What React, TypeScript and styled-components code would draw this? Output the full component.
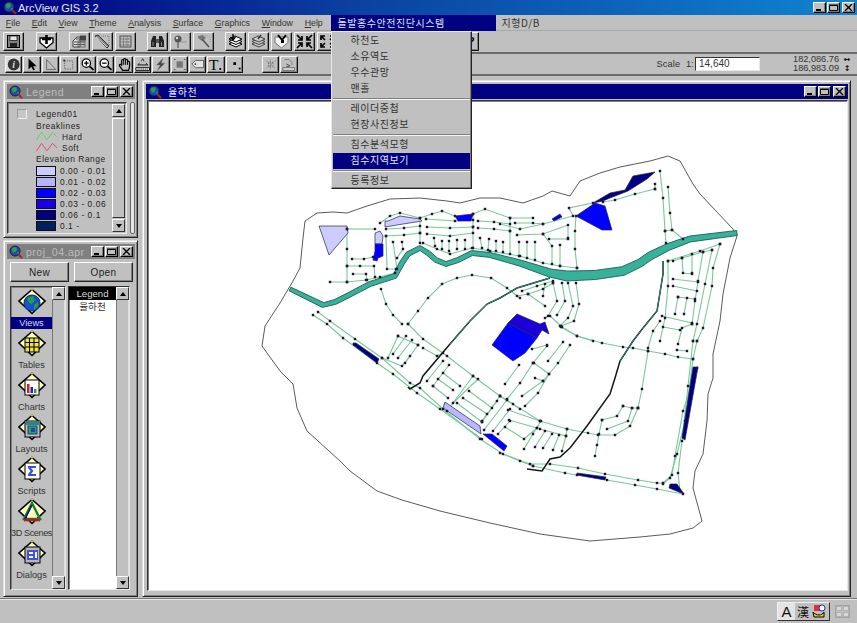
import React from "react";
import styled, { createGlobalStyle } from "styled-components";
import { FaRegHandPaper } from "react-icons/fa";

const GlobalStyle = createGlobalStyle`
  html, body { margin: 0; padding: 0; height: 100%; overflow: hidden; background: #c0c0c0; }
  #root { height: 100%; }
  * { box-sizing: border-box; }
`;

const UI_FONT = `"Liberation Sans", "Noto Sans CJK KR", Arial, sans-serif`;
const KR_FONT = `"Noto Sans CJK KR", "Liberation Sans", sans-serif`;

const Desk = styled.div`
  width: 857px;
  height: 623px;
  display: flex;
  flex-direction: column;
  background: #c0c0c0;
  font-family: ${UI_FONT};
  font-size: 9.2px;
  color: #222;
`;

const AppTitle = styled.header`
  height: 15px;
  flex: none;
  display: flex;
  align-items: center;
  padding: 0 2px 0 3px;
  background: linear-gradient(90deg, #000080 0%, #0a3fa0 40%, #1084d0 100%);
  color: #e8e8f4;
  font-size: 11px;
  gap: 1px;
`;

const Grow = styled.div`
  flex: 1;
`;

const WinButtons = styled.div`
  display: flex;
  gap: 1px;
`;

const WinBtn = styled.button<{ $last?: boolean }>`
  width: 13px;
  height: 11px;
  padding: 0;
  margin-left: ${(p) => (p.$last ? "1px" : "0")};
  display: flex;
  align-items: center;
  justify-content: center;
  background: #c0c0c0;
  border: 1px solid;
  border-color: #fff #000 #000 #fff;
  box-shadow: inset -1px -1px #808080;
`;

const MenuBar = styled.nav`
  height: 16px;
  flex: none;
  display: flex;
  align-items: center;
  position: relative;
  border-bottom: 1px solid #a8a8a8;
  color: #333;
`;

const MenuItem = styled.span`
  padding: 0 5.85px;
  font-size: 8.8px;
  white-space: nowrap;
  u {
    text-underline-offset: 1px;
  }
`;

const KoreanMenu = styled.div<{ $open?: boolean }>`
  position: relative;
  height: 16px;
  display: flex;
  align-items: center;
  width: ${(p) => (p.$open ? "165px" : "auto")};
  margin-left: ${(p) => (p.$open ? "2px" : "6px")};
  padding-left: ${(p) => (p.$open ? "7px" : "0")};
  font-family: ${KR_FONT};
  font-size: 10px;
  letter-spacing: 0.55px;
  background: ${(p) => (p.$open ? "#000080" : "transparent")};
  color: ${(p) => (p.$open ? "#dfe3f2" : "#333")};
`;

const Dropdown = styled.div`
  position: absolute;
  left: 0;
  top: 16px;
  width: 141px;
  height: 158px;
  z-index: 10;
  padding: 1px;
  background: #c0c0c0;
  border: 1px solid;
  border-color: #e8e8e8 #222 #222 #e8e8e8;
  box-shadow: inset -1px -1px #808080;
  color: #333;
`;

const DropItem = styled.div<{ $active?: boolean }>`
  height: 16px;
  line-height: 14px;
  padding-left: 18px;
  background: ${(p) => (p.$active ? "#000080" : "transparent")};
  color: ${(p) => (p.$active ? "#e4e6f4" : "#333")};
`;

const DropRule = styled.hr`
  height: 2px;
  margin: 1px 0;
  border: 0;
  border-top: 1px solid #808080;
  border-bottom: 1px solid #f4f4f4;
`;

const ToolRow = styled.div<{ $h: number }>`
  height: ${(p) => p.$h}px;
  flex: none;
  display: flex;
  align-items: center;
  padding-left: 3px;
  border-bottom: 2px solid #6a6a6a;
`;

const ToolBtn = styled.button<{ $w: number; $h: number; $gap?: number; $pressed?: boolean }>`
  width: ${(p) => p.$w}px;
  height: ${(p) => p.$h}px;
  margin-left: ${(p) => p.$gap ?? 0}px;
  flex: none;
  padding: 0;
  display: flex;
  align-items: center;
  justify-content: center;
  background: ${(p) => (p.$pressed ? "#dcdcdc" : "#c0c0c0")};
  border: 1px solid;
  border-color: #f4f4f4 #111 #111 #f4f4f4;
  border-radius: 1px;
  box-shadow: inset -1px -1px #808080;
`;

const ScaleGroup = styled.div`
  margin-left: auto;
  display: flex;
  align-items: center;
  color: #333;
`;

const ScaleLabel = styled.span`
  font-size: 9.2px;
  letter-spacing: 0.2px;
  margin-right: 1px;
`;

const ScaleInput = styled.div`
  width: 65px;
  height: 14px;
  line-height: 12px;
  padding-left: 3px;
  font-size: 10px;
  background: #fff;
  border: 1px solid;
  border-color: #333 #e8e8e8 #e8e8e8 #333;
`;

const Coords = styled.div`
  width: 97px;
  padding-right: 6px;
  font-size: 9.2px;
  color: #333;
`;

const CoordRow = styled.div`
  height: 9px;
  line-height: 9px;
  display: flex;
  justify-content: flex-end;
`;

const CoordArrow = styled.span`
  width: 8px;
  margin-left: 4px;
  text-align: center;
  font-family: "DejaVu Sans", sans-serif;
  font-weight: 700;
  font-size: 8px;
  color: #111;
`;

const Workspace = styled.main`
  flex: 1;
  min-height: 0;
  display: flex;
  gap: 4px;
  padding: 4px 6px 1px 3px;
`;

const LeftColumn = styled.div`
  width: 135px;
  flex: none;
  display: flex;
  flex-direction: column;
  gap: 2px;
`;

const Win = styled.section<{ $h?: number }>`
  display: flex;
  flex-direction: column;
  height: ${(p) => (p.$h ? `${p.$h}px` : "auto")};
  flex: ${(p) => (p.$h ? "none" : "1")};
  min-width: 0;
  min-height: 0;
  padding: 3px 2px 3px 3px;
  background: #c0c0c0;
  border: 1px solid;
  border-color: #dfdfdf #222 #222 #dfdfdf;
  box-shadow: inset 1px 1px #fff, inset -1px -1px #808080;
`;

const WinTitle = styled.div<{ $active?: boolean }>`
  height: 15px;
  flex: none;
  display: flex;
  align-items: center;
  gap: 3px;
  padding: 0 2px;
  background: ${(p) => (p.$active ? "#000080" : "#808080")};
  color: ${(p) => (p.$active ? "#eef" : "#bdbdbd")};
  font-size: 10.5px;
  letter-spacing: 0.5px;
`;

const KoreanTitle = styled.span`
  font-family: ${KR_FONT};
  font-size: 10px;
  margin-left: 3px;
`;

const LegendBody = styled.div`
  flex: 1;
  display: flex;
  gap: 3px;
  margin-top: 3px;
  min-height: 0;
`;

const Sunken = styled.div`
  display: flex;
  min-height: 0;
  background: #c0c0c0;
  border: 1px solid;
  border-color: #333 #e8e8e8 #e8e8e8 #333;
  box-shadow: inset 1px 1px #808080;
`;

const LegendPane = styled(Sunken)`
  flex: 1;
  padding: 1px;
`;

const LegendList = styled.div`
  flex: 1;
  padding: 3px 0 0 6px;
  font-size: 8.4px;
  letter-spacing: 0.55px;
  color: #222;
`;

const LegendRow = styled.div<{ $indent?: number; $h?: number }>`
  display: flex;
  align-items: center;
  height: ${(p) => p.$h ?? 11}px;
  padding-left: ${(p) => p.$indent ?? 21}px;
  gap: 4px;
  white-space: nowrap;
`;

const CheckBox = styled.span`
  width: 10px;
  height: 10px;
  margin-right: 5px;
  background: #c6c6c6;
  border: 1px solid;
  border-color: #9a9a9a #f0f0f0 #f0f0f0 #9a9a9a;
`;

const Swatch = styled.span<{ $color: string }>`
  width: 20px;
  height: 10px;
  flex: none;
  background: ${(p) => p.$color};
  border: 1px solid #111;
`;

const Strip = styled.div`
  width: 5px;
  border-radius: 2px;
  background: #e6e6e6;
  border: 1px solid #666;
`;

const ScrollBar = styled.div`
  width: 13px;
  flex: none;
  display: flex;
  flex-direction: column;
`;

const ScrollBtn = styled.div`
  height: 13px;
  flex: none;
  display: flex;
  align-items: center;
  justify-content: center;
  background: #c0c0c0;
  border: 1px solid;
  border-color: #fff #333 #333 #fff;
`;

const ScrollArrow = styled.span<{ $down?: boolean }>`
  width: 0;
  height: 0;
  border-left: 3.5px solid transparent;
  border-right: 3.5px solid transparent;
  ${(p) => (p.$down ? "border-top: 4px solid #000;" : "border-bottom: 4px solid #000;")}
`;

const ScrollMid = styled.div<{ $thumb?: boolean }>`
  flex: 1;
  background: #c0c0c0;
  ${(p) =>
    p.$thumb
      ? "border: 1px solid; border-color: #fff #333 #333 #fff; margin: 1px 0;"
      : "border-left: 1px solid #777; border-right: 1px solid #ddd;"}
`;

const ProjectButtons = styled.div`
  display: flex;
  gap: 5px;
  padding: 3px 2px 4px 3px;
`;

const PushButton = styled.button`
  flex: 1;
  height: 20px;
  padding: 0;
  background: #c0c0c0;
  font-family: ${UI_FONT};
  font-size: 10px;
  letter-spacing: 0.4px;
  color: #222;
  border: 1px solid;
  border-color: #fff #222 #222 #fff;
  box-shadow: inset -1px -1px #808080;
`;

const ProjectPanes = styled.div`
  flex: 1;
  min-height: 0;
  display: flex;
  gap: 2px;
  padding: 0 5px 3px 3px;
`;

const TypePane = styled(Sunken)`
  width: 56px;
  flex: none;
`;

const TypeList = styled.div`
  flex: 1;
  min-width: 0;
  overflow: hidden;
  padding-top: 1px;
`;

const TypeItem = styled.div`
  height: 42px;
  display: flex;
  flex-direction: column;
  align-items: center;
`;

const TypeLabel = styled.span<{ $active?: boolean; $squeeze?: boolean }>`
  align-self: stretch;
  height: 12px;
  line-height: 12px;
  margin-top: 1px;
  text-align: center;
  white-space: nowrap;
  letter-spacing: ${(p) => (p.$squeeze ? "-0.45px" : "0")};
  background: ${(p) => (p.$active ? "#000080" : "transparent")};
  color: ${(p) => (p.$active ? "#d8dcf0" : "#333")};
`;

const DocPane = styled(Sunken)`
  flex: 1;
  background: #fff;
`;

const DocList = styled.div`
  flex: 1;
  min-width: 0;
  text-align: center;
  font-size: 10px;
`;

const DocHead = styled.div`
  height: 13px;
  line-height: 13px;
  background: #000;
  color: #ddd;
  font-size: 9.6px;
`;

const DocRow = styled.div`
  height: 13px;
  line-height: 13px;
  font-family: ${KR_FONT};
  font-size: 9.6px;
  color: #333;
`;

const ViewWin = styled(Win)`
  flex: 1;
`;

const Canvas = styled(Sunken)`
  flex: 1;
  margin: 1px 0 2px 1px;
  background: #fff;
  overflow: hidden;
`;

const MapSvg = styled.svg`
  display: block;
  width: 700px;
  height: 491px;
  flex: none;
`;

const StatusBar = styled.footer`
  height: 25px;
  flex: none;
  display: flex;
  align-items: center;
  justify-content: flex-end;
  gap: 5px;
  padding-right: 7px;
  border-top: 1px solid #7a7a7a;
  box-shadow: inset 0 1px #e6e6e6;
`;

const ImeBar = styled.div`
  height: 19px;
  width: 53px;
  display: flex;
  align-items: center;
  background: #c0c0c0;
  border: 1px solid;
  border-color: #f0f0f0 #333 #333 #f0f0f0;
`;

const ImeA = styled.span`
  width: 17px;
  text-align: center;
  background: #e4e4e4;
  font-size: 15px;
  line-height: 17px;
  color: #111;
`;

const ImeHan = styled.span`
  width: 16px;
  text-align: center;
  font-family: "Noto Sans CJK KR", sans-serif;
  font-size: 12px;
  line-height: 17px;
  color: #111;
`;

const SoftGrid = styled.div`
  width: 15px;
  height: 13px;
  display: grid;
  grid-template-columns: 1fr 1fr;
  grid-template-rows: 1fr 1fr;
  gap: 1px;
  background: #c0c0c0;
  border: 1px solid #a4a4a4;
  span {
    background: #d8d8d8;
    border: 1px solid #b0b0b0;
  }
`;

const Glyph = ({ children }: { children: React.ReactNode }) => (
  <svg width="17" height="15" viewBox="0 0 17 15">{children}</svg>
);

const lens = (
  <>
    <circle cx="7" cy="6" r="4.6" fill="#fff" stroke="#000" strokeWidth="1.4" />
    <path d="M10.5 9.5L15 13.5" stroke="#000" strokeWidth="2" />
  </>
);

const layers = (fill: string, stroke: string) => (
  <>
    <path d="M2 10L8 7L15 10L9 13Z" fill={fill} stroke={stroke} />
    <path d="M2 7.5L8 4.5L15 7.5L9 10.5Z" fill={fill} stroke={stroke} />
    <path d="M2 5L8 2L15 5L9 8Z" fill={fill} stroke={stroke} />
  </>
);

const TOOL_ICONS: Record<string, React.ReactNode> = {
  save: (
    <>
      <rect x="2.5" y="1.5" width="12" height="12" fill="#808080" stroke="#000" />
      <rect x="5" y="2" width="7" height="4.5" fill="#e8e8e8" stroke="#000" strokeWidth="0.7" />
      <rect x="5" y="9" width="7" height="4" fill="#222" />
    </>
  ),
  addTheme: (
    <>
      <path d="M2 4H15V8.5L8.5 14L2 8.5Z" fill="#fff" stroke="#000" strokeWidth="1.3" />
      <path d="M8.5 1V10M4 5H13" stroke="#000" strokeWidth="2.6" />
    </>
  ),
  themeProps: (
    <>
      <path d="M2 7L6 3H9V13H2Z" fill="#ddd" stroke="#444" />
      <rect x="9" y="1.5" width="6" height="5" fill="#444" />
      <path d="M3 8H14M3 10.5H14M5 5H9" stroke="#555" />
      <rect x="7" y="7" width="7" height="6" fill="none" stroke="#666" />
    </>
  ),
  ruler: (
    <>
      <path d="M1 2L4 1L15 12L13 14Z" fill="#888" stroke="#333" />
      <path d="M5 2H15V11" fill="none" stroke="#777" strokeDasharray="1 1" />
      <path d="M2 3L13 13" stroke="#ddd" />
    </>
  ),
  table: (
    <>
      <rect x="3" y="2" width="11" height="11" fill="#bbb" stroke="#555" />
      <path d="M3 5H14M6.5 2V13M10 2V13M3 8H14M3 11H14" stroke="#666" strokeDasharray="1 .6" />
    </>
  ),
  binoculars: (
    <>
      <path d="M2 13V7L4 2H7V13ZM10 13V2H13L15 7V13Z" fill="#222" />
      <rect x="7" y="5" width="3" height="4" fill="#555" />
      <path d="M4 8V12M12.5 8V12" stroke="#888" />
    </>
  ),
  query: (
    <>
      <circle cx="6" cy="5" r="3.5" fill="#555" />
      <circle cx="5" cy="4" r="1.2" fill="#ddd" />
      <path d="M6 8V14" stroke="#666" strokeWidth="1.4" />
      <path d="M9 8H15" stroke="#aaa" strokeWidth="2" />
    </>
  ),
  hammer: (
    <>
      <path d="M3 2L8 1L11 4L7 7L3 4Z" fill="#777" />
      <path d="M7 5L14 13" stroke="#555" strokeWidth="1.6" />
      <path d="M10 2H15V8" fill="none" stroke="#999" strokeDasharray="1 1" />
    </>
  ),
  stackDown: (
    <>
      {layers("#fff", "#000")}
      <path d="M6 0V5M3.5 3L6 6L8.5 3" stroke="#000" strokeWidth="1.4" fill="none" />
    </>
  ),
  stackGrey: (
    <>
      {layers("#ccc", "#444")}
      <path d="M11 1L8 5" stroke="#333" strokeWidth="1.4" />
    </>
  ),
  shield: (
    <>
      <path d="M2 3H15V8.5L8.5 14L2 8.5Z" fill="#f4f4f4" stroke="#777" />
      <path d="M5 1L9 6M13 1L9 6" stroke="#000" strokeWidth="2" />
      <rect x="8" y="6" width="3" height="3" fill="#000" />
    </>
  ),
  zoomIn: <path d="M1 1L6 6M6 2V6H2M16 1L11 6M11 2V6H15M1 14L6 9M6 13V9H2M16 14L11 9M11 13V9H15" stroke="#000" strokeWidth="1.7" fill="none" />,
  zoomOut: <path d="M6 6L2 2M2 6V2H6M11 6L15 2M15 6V2H11M6 9L2 13M2 9V13H6M11 9L15 13M15 9V13H11" stroke="#000" strokeWidth="1.7" fill="none" />,
  help: (
    <>
      <path d="M3 2L7 8" stroke="#000" strokeWidth="1.6" />
      <text x="8" y="11" fontFamily="Liberation Sans" fontSize="11" fontWeight="700">?</text>
    </>
  ),
  info: (
    <>
      <circle cx="8.5" cy="7.5" r="6.5" fill="#333" />
      <text x="8.5" y="11.5" textAnchor="middle" fontFamily="Liberation Serif" fontSize="11" fontStyle="italic" fontWeight="700" fill="#ddd">i</text>
    </>
  ),
  pointer: <path d="M5 1V13L8 10L10.5 14L12 13L10 9.5H14Z" fill="#000" />,
  vertex: <path d="M4 2V13H14ZM4 2" fill="none" stroke="#666" />,
  dashSquare: (
    <>
      <rect x="4" y="3.5" width="9" height="9" fill="none" stroke="#666" strokeDasharray="1.5 1" />
      <rect x="2.5" y="2" width="2" height="2" fill="#333" />
    </>
  ),
  zoomPlus: (
    <>
      {lens}
      <path d="M4.5 6H9.5M7 3.5V8.5" stroke="#000" strokeWidth="1.4" />
    </>
  ),
  zoomMinus: (
    <>
      {lens}
      <path d="M4.5 6H9.5" stroke="#000" strokeWidth="1.4" />
    </>
  ),
  measure: (
    <>
      <path d="M1 11H16V14H1Z" fill="#fff" stroke="#000" />
      <path d="M3 8H14M3 8L5 6M14 8L12 6" stroke="#000" />
      <path d="M7 4L8.5 1L10 4" stroke="#333" fill="none" />
      <path d="M3 12.5H14" stroke="#000" strokeDasharray="1 1" />
    </>
  ),
  bolt: <path d="M11 1L4 8H8L5 14L13 6H9Z" fill="#444" stroke="#777" strokeWidth=".6" />,
  nodes: (
    <>
      <rect x="5" y="4" width="7" height="7" fill="#777" />
      <path d="M2 2H4M13 2H15M2 13H4M13 13H15" stroke="#555" />
    </>
  ),
  tag: (
    <>
      <path d="M2 7L6 3H15V11H6Z" fill="#e4e4e4" stroke="#555" />
      <circle cx="6" cy="7" r="1" fill="#333" />
    </>
  ),
  typeT: (
    <>
      <text x="1" y="13.5" fontFamily="Liberation Serif" fontSize="17" fill="#000">T</text>
      <rect x="12.5" y="11.5" width="2" height="2" fill="#000" />
    </>
  ),
  point: (
    <>
      <rect x="7" y="5" width="3" height="3" fill="#000" />
      <rect x="13" y="11" width="2" height="2" fill="#000" />
    </>
  ),
  scatter: (
    <>
      <path d="M3 3L14 12M14 3L3 12M8 2V13" stroke="#777" strokeDasharray="1 1" />
      <rect x="6" y="5" width="5" height="5" fill="none" stroke="#666" strokeDasharray="1 1" />
    </>
  ),
  note: (
    <>
      <path d="M4 2H9L12 5V8" fill="none" stroke="#777" />
      <path d="M2 11H15V14H2Z" fill="#ddd" stroke="#666" />
      <path d="M6 7L10 9L6 10" fill="none" stroke="#444" />
    </>
  ),
};

const TOP_TOOLS: { icon?: string; gap?: number }[] = [
  { icon: "save" },
  { icon: "addTheme", gap: 12 },
  { icon: "themeProps", gap: 12 },
  { icon: "ruler", gap: 2 },
  { icon: "table", gap: 2 },
  { icon: "binoculars", gap: 11 },
  { icon: "query", gap: 2 },
  { icon: "hammer", gap: 2 },
  { icon: "stackDown", gap: 11 },
  { icon: "stackGrey", gap: 2 },
  { icon: "shield", gap: 2 },
  { icon: "zoomIn", gap: 2 },
  { icon: "zoomOut", gap: 2 },
  { icon: "help", gap: 120 },
];

const BOTTOM_TOOLS: { icon: string; gap?: number; pressed?: boolean }[] = [
  { icon: "info", gap: 2, pressed: true },
  { icon: "pointer", gap: 1 },
  { icon: "vertex", gap: 1 },
  { icon: "dashSquare", gap: 1 },
  { icon: "zoomPlus", gap: 1 },
  { icon: "zoomMinus", gap: 1 },
  { icon: "hand", gap: 1 },
  { icon: "measure", gap: 1 },
  { icon: "bolt", gap: 1 },
  { icon: "nodes", gap: 1 },
  { icon: "tag", gap: 1 },
  { icon: "typeT", gap: 1 },
  { icon: "point", gap: 1 },
  { icon: "scatter", gap: 19 },
  { icon: "note", gap: 1 },
];

const MENUS: [string, string][] = [
  ["F", "ile"],
  ["E", "dit"],
  ["V", "iew"],
  ["T", "heme"],
  ["A", "nalysis"],
  ["S", "urface"],
  ["G", "raphics"],
  ["W", "indow"],
  ["H", "elp"],
];

const LEGEND_RANGES = [
  ["#ccccff", "0.00 - 0.01"],
  ["#b4b4ff", "0.01 - 0.02"],
  ["#0000ff", "0.02 - 0.03"],
  ["#1800e4", "0.03 - 0.06"],
  ["#000080", "0.06 - 0.1"],
  ["#002060", "0.1 -"],
];

const Globe = () => (
  <svg width="14" height="14" viewBox="0 0 14 14">
    <circle cx="6" cy="6" r="5" fill="#1e46c8" stroke="#222" />
    <path d="M3 3L7 2L8 5L5 8L3 6ZM8 7L10 7L9 10Z" fill="#2ca03c" />
    <path d="M9.5 9.5L13 13" stroke="#b02020" strokeWidth="2" />
  </svg>
);

const WindowControls = () => (
  <WinButtons>
    <WinBtn>
      <svg width="9" height="7"><rect x="1" y="5" width="5" height="2" fill="#000" /></svg>
    </WinBtn>
    <WinBtn>
      <svg width="9" height="7"><path d="M0.5 1.5H8.5V6.5H0.5ZM0 1H9" fill="none" stroke="#000" /></svg>
    </WinBtn>
    <WinBtn $last>
      <svg width="9" height="7"><path d="M1 0L8 7M8 0L1 7" stroke="#000" strokeWidth="1.4" /></svg>
    </WinBtn>
  </WinButtons>
);

const VerticalScroll = ({ thumb }: { thumb?: boolean }) => (
  <ScrollBar>
    <ScrollBtn><ScrollArrow /></ScrollBtn>
    <ScrollMid $thumb={thumb} />
    <ScrollBtn><ScrollArrow $down /></ScrollBtn>
  </ScrollBar>
);

const Diamond = ({ children }: { children: React.ReactNode }) => (
  <svg width="28" height="28" viewBox="0 0 28 28">
    <path d="M14 1.5L27 13L14 25.5L1 13Z" fill="#ffffc0" stroke="#000" strokeWidth="1.6" />
    <path d="M12.5 1L14 3L15.5 1Z" fill="#d8c040" />
    {children}
  </svg>
);

const TYPE_ICONS: [string, React.ReactNode][] = [
  [
    "Views",
    <>
      <circle cx="14" cy="15" r="8" fill="#1a50d0" stroke="#103070" />
      <path d="M9 10L15 8L17 12L14 16L11 15ZM16 17L20 14L20 18L16 22Z" fill="#20a040" />
    </>,
  ],
  [
    "Tables",
    <>
      <rect x="7" y="8" width="14" height="14" fill="#f0e040" stroke="#000" />
      <path d="M7 12.5H21M7 17H21M11.5 8V22M16 8V22" stroke="#000" />
    </>,
  ],
  [
    "Charts",
    <>
      <rect x="7" y="8" width="14" height="15" fill="#fff" stroke="#000" />
      <rect x="9" y="12" width="2.5" height="9" fill="#d02020" />
      <rect x="12.5" y="15" width="2.5" height="6" fill="#2020d0" />
      <rect x="16" y="17" width="2.5" height="4" fill="#20a040" />
    </>,
  ],
  [
    "Layouts",
    <>
      <rect x="7" y="7" width="15" height="16" fill="#c0c0c0" stroke="#000" />
      <rect x="7" y="7" width="15" height="4" fill="#308088" />
      <rect x="10" y="12" width="9" height="8" fill="#30a060" stroke="#104080" />
      <path d="M13 14H17V18H13Z" fill="#2040c0" />
    </>,
  ],
  [
    "Scripts",
    <>
      <rect x="7" y="7" width="15" height="16" fill="#fff" stroke="#000" />
      <path d="M10 10H18V12H13L15.5 15L13 18H18V20H10V18L12.5 15L10 12Z" fill="#3c50e0" />
    </>,
  ],
  [
    "3D Scenes",
    <>
      <path d="M14 5L22 21H6Z" fill="none" stroke="#108030" strokeWidth="2.4" />
      <path d="M6 22H22" stroke="#b02020" strokeWidth="2.6" />
      <path d="M14 7L7 21" stroke="#101080" strokeWidth="1.6" />
    </>,
  ],
  [
    "Dialogs",
    <>
      <rect x="7" y="7" width="15" height="16" fill="#b8b8b8" stroke="#000" />
      <rect x="9" y="10" width="11" height="10" fill="#4050e8" />
      <rect x="11" y="12" width="4" height="2" fill="#fff" />
      <rect x="11" y="16" width="4" height="2" fill="#fff" />
      <rect x="17" y="12" width="2" height="6" fill="#fff" />
    </>,
  ],
];

type Pt = [number, number];

const BOUNDARY: Pt[] = [
  [262, 345], [265, 325], [280, 302], [293, 280], [300, 267], [303, 237], [305, 220], [317, 212], [333, 211],
  [347, 212], [367, 205], [390, 198], [420, 197], [447, 200], [460, 202], [480, 197], [500, 197], [523, 202],
  [543, 195], [552, 190], [570, 195], [580, 180], [600, 172], [620, 166], [650, 160], [668, 155], [680, 160],
  [693, 183], [700, 193], [733, 228], [737, 235], [730, 257], [723, 293], [720, 320], [713, 353], [713, 377],
  [708, 393], [707, 420], [703, 453], [695, 470], [693, 487], [702, 520], [693, 527], [670, 533], [640, 536],
  [590, 540], [540, 533], [490, 522], [440, 510], [402, 499], [377, 490], [350, 470], [340, 460], [307, 430],
  [297, 407], [293, 383], [280, 370], [262, 345],
];

// centre line of the river with its width at each point
const RIVER: [number, number, number][] = [
  [290, 288, 4], [323, 304, 5], [335, 301, 5], [347, 295, 5], [370, 283, 5], [395, 275, 5], [402, 262, 5],
  [408, 253, 5], [420, 247, 5], [428, 252, 5], [436, 259, 5], [446, 263, 5], [458, 259, 5], [472, 252, 5],
  [490, 254, 5], [520, 262, 6], [550, 272, 8], [567, 275, 10], [595, 274, 9], [623, 270, 9], [640, 262, 8],
  [650, 255, 8], [668, 246, 7], [690, 238, 6], [737, 232, 5],
];

const ribbon = (line: [number, number, number][]) => {
  const left: string[] = [];
  const right: string[] = [];
  line.forEach(([x, y, w], i) => {
    const [ax, ay] = line[Math.max(i - 1, 0)];
    const [bx, by] = line[Math.min(i + 1, line.length - 1)];
    const len = Math.hypot(bx - ax, by - ay) || 1;
    const nx = ((by - ay) / len) * (w / 2);
    const ny = (-(bx - ax) / len) * (w / 2);
    left.push(`${(x + nx).toFixed(1)},${(y + ny).toFixed(1)}`);
    right.unshift(`${(x - nx).toFixed(1)},${(y - ny).toFixed(1)}`);
  });
  return [...left, ...right].join(" ");
};

const CREEKS: Pt[][] = [
  [[663, 260], [663, 273], [657, 310], [643, 327], [633, 340], [620, 360], [615, 377], [610, 393], [587, 425],
   [570, 447], [560, 456], [550, 458], [542, 470], [527, 468]],
  [[550, 277], [517, 287], [500, 297], [487, 303], [470, 320], [450, 343], [423, 375], [420, 382], [410, 388], [408, 386]],
];

const SHAPES: { fill: string; pts: string }[] = [
  { fill: "#ccccff", pts: "319,225 347,225 348,232 329,254" },
  { fill: "#ccccff", pts: "375,232 380,230 383,235 382,243 375,243" },
  { fill: "#0000ff", pts: "375,243 383,243 383,255 378,257 377,260 373,259 375,250" },
  { fill: "#ccccff", pts: "385,220 388,220 400,215 420,218 422,220 403,223 385,226" },
  { fill: "#0000ff", pts: "455,215 473,213 471,220 458,220" },
  { fill: "#0000e0", pts: "552,218 560,213 562,216 554,220" },
  { fill: "#0000ff", pts: "576,215 595,202 605,205 612,229 602,229" },
  { fill: "#000080", pts: "593,202 610,192 625,189 633,175 655,171 647,178 628,190 610,197 603,200" },
  { fill: "#0000ff", pts: "492,344 508,322 537,337 525,352 513,360" },
  { fill: "#1c00d8", pts: "508,322 517,313 540,323 545,321 549,333 542,329 537,337" },
  { fill: "#000080", pts: "353,342 356,342 379,358 377,362 353,344" },
  { fill: "#b8b8ff", pts: "445,401 480,425 481,433 443,407" },
  { fill: "#0000ff", pts: "483,433 492,433 507,445 504,450" },
  { fill: "#000080", pts: "693,366 698,366 685,439 682,437" },
  { fill: "#000080", pts: "577,472 606,476 605,479 577,474" },
  { fill: "#000080", pts: "670,483 677,483 684,493 669,487" },
];

const ROADS: Pt[][] = [
  // north west block
  [[330, 281], [347, 281], [366, 279], [380, 276], [395, 272]],
  [[347, 228], [347, 248], [347, 265], [347, 281]],
  [[352, 258], [364, 258], [373, 256]],
  [[347, 265], [360, 265], [374, 265], [375, 276]],
  [[353, 273], [366, 273], [367, 279]],
  [[347, 228], [375, 228]],
  [[380, 222], [390, 215], [400, 212], [420, 217], [432, 213], [442, 210], [455, 215]],
  [[473, 213], [485, 208], [510, 217], [533, 217]],
  [[386, 228], [404, 227], [420, 225]],
  [[386, 235], [404, 234], [420, 232]],
  [[420, 217], [420, 232], [420, 242]],
  [[386, 235], [387, 268], [396, 268]],
  [[393, 241], [397, 268]],
  [[402, 241], [403, 248], [397, 257]],
  [[426, 218], [455, 220], [473, 219]],
  [[427, 226], [450, 227], [473, 226]],
  [[427, 233], [450, 235], [473, 232]],
  [[473, 213], [473, 226], [473, 247]],
  [[478, 220], [494, 221], [510, 223]],
  [[478, 227], [494, 228], [510, 230]],
  [[480, 237], [482, 247]],
  [[489, 238], [488, 249]],
  [[496, 240], [496, 250]],
  [[503, 241], [503, 251]],
  [[510, 217], [510, 230], [510, 253]],
  [[434, 237], [435, 245]],
  [[442, 240], [442, 248]],
  [[449, 240], [449, 250]],
  [[457, 239], [457, 248]],
  [[465, 239], [465, 248]],
  [[423, 242], [437, 248], [450, 253], [472, 247], [490, 250], [520, 255], [543, 262], [560, 265], [577, 267]],
  // north centre
  [[500, 223], [520, 228], [543, 223], [573, 215], [569, 207], [593, 202]],
  [[515, 222], [533, 222], [543, 223]],
  [[517, 234], [543, 233], [568, 224], [568, 237]],
  [[549, 238], [568, 238]],
  [[543, 233], [552, 245], [552, 263]],
  [[560, 244], [560, 265]],
  [[576, 215], [575, 230], [575, 248], [577, 267]],
  [[519, 241], [519, 255]],
  [[527, 241], [527, 257]],
  [[535, 241], [535, 259]],
  [[603, 201], [615, 199], [635, 193], [655, 188]],
  [[655, 183], [655, 188]],
  [[660, 170], [663, 197], [665, 230], [666, 242]],
  [[668, 186], [670, 212], [672, 229], [683, 238]],
  [[665, 230], [672, 229]],
  // east block
  [[668, 260], [700, 250], [720, 243]],
  [[673, 260], [682, 257], [703, 251], [712, 249]],
  [[720, 243], [713, 267], [712, 285], [703, 327], [697, 340]],
  [[712, 249], [705, 283], [697, 323], [693, 340]],
  [[697, 340], [693, 358], [685, 420], [677, 453], [670, 477], [663, 483]],
  [[693, 340], [688, 385], [682, 440], [678, 472], [680, 490]],
  [[668, 260], [668, 285], [665, 317], [660, 340]],
  [[682, 257], [683, 272], [692, 273]],
  [[692, 253], [692, 272]],
  [[703, 251], [698, 280], [695, 300], [692, 323]],
  [[673, 278], [698, 281]],
  [[673, 285], [697, 290]],
  [[678, 296], [675, 313]],
  [[678, 296], [695, 298]],
  [[687, 297], [684, 313]],
  [[662, 315], [692, 322]],
  [[663, 326], [680, 329]],
  [[678, 343], [682, 327], [692, 323]],
  [[677, 349], [687, 350]],
  [[648, 350], [642, 388], [638, 407]],
  [[648, 347], [653, 330], [660, 320]],
  [[561, 326], [577, 335], [602, 342], [623, 346], [633, 347], [648, 350], [665, 353], [678, 356], [693, 358]],
  // curved cul-de-sac
  [[623, 405], [617, 415], [602, 419]],
  [[632, 407], [628, 420], [607, 428]],
  [[638, 407], [630, 425], [615, 434], [598, 434], [588, 432], [567, 428], [540, 420], [508, 409]],
  [[623, 405], [632, 407], [638, 407]],
  [[602, 419], [599, 433], [597, 444], [595, 455]],
  [[500, 395], [513, 403], [540, 420]],
  // south edge
  [[500, 452], [530, 463], [550, 463], [578, 467], [605, 473], [638, 479], [657, 482], [663, 482], [672, 474], [675, 455], [683, 410], [697, 367]],
  [[533, 465], [565, 472], [577, 474], [607, 479], [635, 484], [657, 488], [683, 493]],
  // diagonals
  [[318, 311], [330, 320], [355, 338], [382, 357], [410, 382], [420, 387], [443, 408], [480, 438], [503, 453], [520, 460], [533, 465]],
  [[313, 314], [327, 323], [343, 337], [377, 362], [393, 373], [417, 392], [440, 408], [482, 438]],
  [[408, 323], [423, 338], [447, 355], [473, 375], [500, 395], [520, 408]],
  [[500, 395], [482, 420]],
  [[507, 399], [484, 429]],
  [[398, 335], [388, 357]],
  [[406, 335], [393, 353]],
  [[412, 339], [398, 357]],
  [[418, 344], [405, 362]],
  [[398, 335], [418, 344]],
  [[423, 347], [437, 355], [443, 352]],
  [[382, 357], [402, 365], [410, 355]],
  [[427, 380], [443, 360]],
  [[433, 385], [449, 364]],
  [[443, 372], [460, 385]],
  [[438, 378], [453, 389]],
  [[433, 385], [448, 397]],
  [[478, 378], [453, 402]],
  [[469, 390], [492, 407]],
  [[463, 397], [487, 413]],
  [[457, 402], [482, 421]],
  [[497, 400], [482, 421]],
  [[473, 375], [447, 410]],
  [[510, 408], [493, 430]],
  [[510, 420], [498, 433]],
  // south centre
  [[519, 364], [505, 383]],
  [[533, 362], [520, 382], [507, 398]],
  [[547, 345], [533, 362]],
  [[563, 341], [548, 360]],
  [[570, 344], [558, 362], [549, 373], [543, 380]],
  [[532, 348], [547, 344]],
  [[534, 362], [549, 373], [538, 392], [525, 405]],
  [[535, 377], [543, 380], [522, 395]],
  [[509, 419], [537, 427]],
  [[505, 426], [524, 438], [537, 427]],
  [[541, 420], [533, 433], [524, 448]],
  [[545, 430], [535, 446]],
  [[552, 433], [543, 447]],
  [[559, 434], [553, 449]],
  [[566, 435], [562, 450]],
  [[540, 428], [566, 435], [567, 428]],
  // rings north of the park
  [[522, 290], [537, 285], [553, 280]],
  [[517, 295], [528, 293], [543, 288], [553, 282]],
  [[528, 293], [545, 305]],
  [[545, 283], [543, 295]],
  [[553, 282], [557, 300], [548, 315], [545, 317]],
  [[562, 282], [565, 300], [557, 314]],
  [[568, 282], [573, 305], [568, 317], [560, 325]],
  [[576, 282], [579, 303], [574, 320], [561, 325]],
  [[550, 315], [562, 326], [577, 335], [593, 340]],
  // big arc
  [[408, 323], [418, 310], [428, 297], [442, 283], [457, 277], [472, 274], [491, 277], [507, 287], [520, 297]],
  [[381, 288], [386, 303], [393, 314], [402, 323]],
];

const MapDrawing = () => (
  <MapSvg viewBox="148 100 700 491">
    <polyline points={BOUNDARY.join(" ")} fill="none" stroke="#5a5a5a" strokeWidth="1" />
    {ROADS.map((road, i) => (
      <polyline key={i} points={road.join(" ")} fill="none" stroke="#78c898" strokeWidth="1.1" />
    ))}
    {SHAPES.map((s, i) => (
      <polygon key={i} points={s.pts} fill={s.fill} stroke="#222250" strokeWidth="0.7" />
    ))}
    <polygon points={ribbon(RIVER)} fill="#38b09a" stroke="#1d5f52" strokeWidth="0.9" />
    {CREEKS.map((c, i) => (
      <g key={i}>
        <polyline points={c.join(" ")} fill="none" stroke="#101818" strokeWidth="1.5" />
        <polyline points={c.slice(0, 6).join(" ")} fill="none" stroke="#2a8878" strokeWidth="1" />
      </g>
    ))}
    {ROADS.flat().map(([x, y], i) => (
      <rect key={i} x={x - 1.2} y={y - 1.2} width="2.4" height="2.4" fill="#21142e" />
    ))}
  </MapSvg>
);

export default function App() {
  return (
    <Desk>
      <GlobalStyle />
      <AppTitle>
        <Globe />
        <span>ArcView GIS 3.2</span>
        <Grow />
        <WindowControls />
      </AppTitle>

      <MenuBar>
        {MENUS.map(([key, rest]) => (
          <MenuItem key={key}><u>{key}</u>{rest}</MenuItem>
        ))}
        <KoreanMenu $open>
          돌발홍수안전진단시스템
          <Dropdown>
            <DropItem>하천도</DropItem>
            <DropItem>소유역도</DropItem>
            <DropItem>우수관망</DropItem>
            <DropItem>맨홀</DropItem>
            <DropRule />
            <DropItem>레이더중첩</DropItem>
            <DropItem>현장사진정보</DropItem>
            <DropRule />
            <DropItem>침수분석모형</DropItem>
            <DropItem $active>침수지역보기</DropItem>
            <DropRule />
            <DropItem>등록정보</DropItem>
          </Dropdown>
        </KoreanMenu>
        <KoreanMenu>지형D/B</KoreanMenu>
      </MenuBar>

      <ToolRow $h={23}>
        {TOP_TOOLS.map((t, i) => (
          <ToolBtn key={i} $w={21} $h={19} $gap={t.gap}>
            {t.icon && <Glyph>{TOOL_ICONS[t.icon]}</Glyph>}
          </ToolBtn>
        ))}
      </ToolRow>

      <ToolRow $h={22}>
        {BOTTOM_TOOLS.map((t) => (
          <ToolBtn key={t.icon} $w={17.4} $h={17} $gap={t.gap} $pressed={t.pressed}>
            {t.icon === "hand" ? <FaRegHandPaper size={13} color="#000" /> : <Glyph>{TOOL_ICONS[t.icon]}</Glyph>}
          </ToolBtn>
        ))}
        <ScaleGroup>
          <ScaleLabel>Scale&nbsp; 1:</ScaleLabel>
          <ScaleInput>14,640</ScaleInput>
          <Coords>
            <CoordRow>182,086.76<CoordArrow>↔</CoordArrow></CoordRow>
            <CoordRow>186,983.09<CoordArrow>↕</CoordArrow></CoordRow>
          </Coords>
        </ScaleGroup>
      </ToolRow>

      <Workspace>
        <LeftColumn>
          <Win $h={158}>
            <WinTitle>
              <Globe />
              <span>Legend</span>
              <Grow />
              <WindowControls />
            </WinTitle>
            <LegendBody>
              <LegendPane>
                <LegendList>
                  <LegendRow $indent={2} $h={13}><CheckBox />Legend01</LegendRow>
                  <LegendRow>Breaklines</LegendRow>
                  <LegendRow>
                    <svg width="22" height="11" viewBox="0 0 24 11"><path d="M0 10L6 1L12 9L18 1L23 6" fill="none" stroke="#40e040" /></svg>
                    Hard
                  </LegendRow>
                  <LegendRow>
                    <svg width="22" height="11" viewBox="0 0 24 11"><path d="M0 10L6 1L12 9L18 1L23 6" fill="none" stroke="#e84060" /></svg>
                    Soft
                  </LegendRow>
                  <LegendRow $h={12}>Elevation Range</LegendRow>
                  {LEGEND_RANGES.map(([color, label]) => (
                    <LegendRow key={label}><Swatch $color={color} />{label}</LegendRow>
                  ))}
                </LegendList>
                <VerticalScroll thumb />
              </LegendPane>
              <Strip />
            </LegendBody>
          </Win>

          <Win>
            <WinTitle>
              <Globe />
              <span>proj_04.apr</span>
              <Grow />
              <WindowControls />
            </WinTitle>
            <ProjectButtons>
              <PushButton>New</PushButton>
              <PushButton>Open</PushButton>
            </ProjectButtons>
            <ProjectPanes>
              <TypePane>
                <TypeList>
                  {TYPE_ICONS.map(([label, art], i) => (
                    <TypeItem key={label}>
                      <Diamond>{art}</Diamond>
                      <TypeLabel $active={i === 0} $squeeze={label.length > 7}>{label}</TypeLabel>
                    </TypeItem>
                  ))}
                </TypeList>
                <VerticalScroll />
              </TypePane>
              <DocPane>
                <DocList>
                  <DocHead>Legend</DocHead>
                  <DocRow>율하천</DocRow>
                </DocList>
                <VerticalScroll />
              </DocPane>
            </ProjectPanes>
          </Win>
        </LeftColumn>

        <ViewWin>
          <WinTitle $active>
            <Globe />
            <KoreanTitle>율하천</KoreanTitle>
            <Grow />
            <WindowControls />
          </WinTitle>
          <Canvas>
            <MapDrawing />
          </Canvas>
        </ViewWin>
      </Workspace>

      <StatusBar>
        <ImeBar>
          <ImeA>A</ImeA>
          <ImeHan>漢</ImeHan>
          <svg width="16" height="16" viewBox="0 0 16 16">
            <path d="M2 9C5 13 11 13 13 9L13 14H3Z" fill="#f0d820" stroke="#000" />
            <path d="M3 2H9V8H3Z" fill="#e03030" />
            <circle cx="11" cy="5" r="3" fill="#fff" stroke="#2030c0" />
          </svg>
        </ImeBar>
        <SoftGrid><span /><span /><span /><span /></SoftGrid>
      </StatusBar>
    </Desk>
  );
}
